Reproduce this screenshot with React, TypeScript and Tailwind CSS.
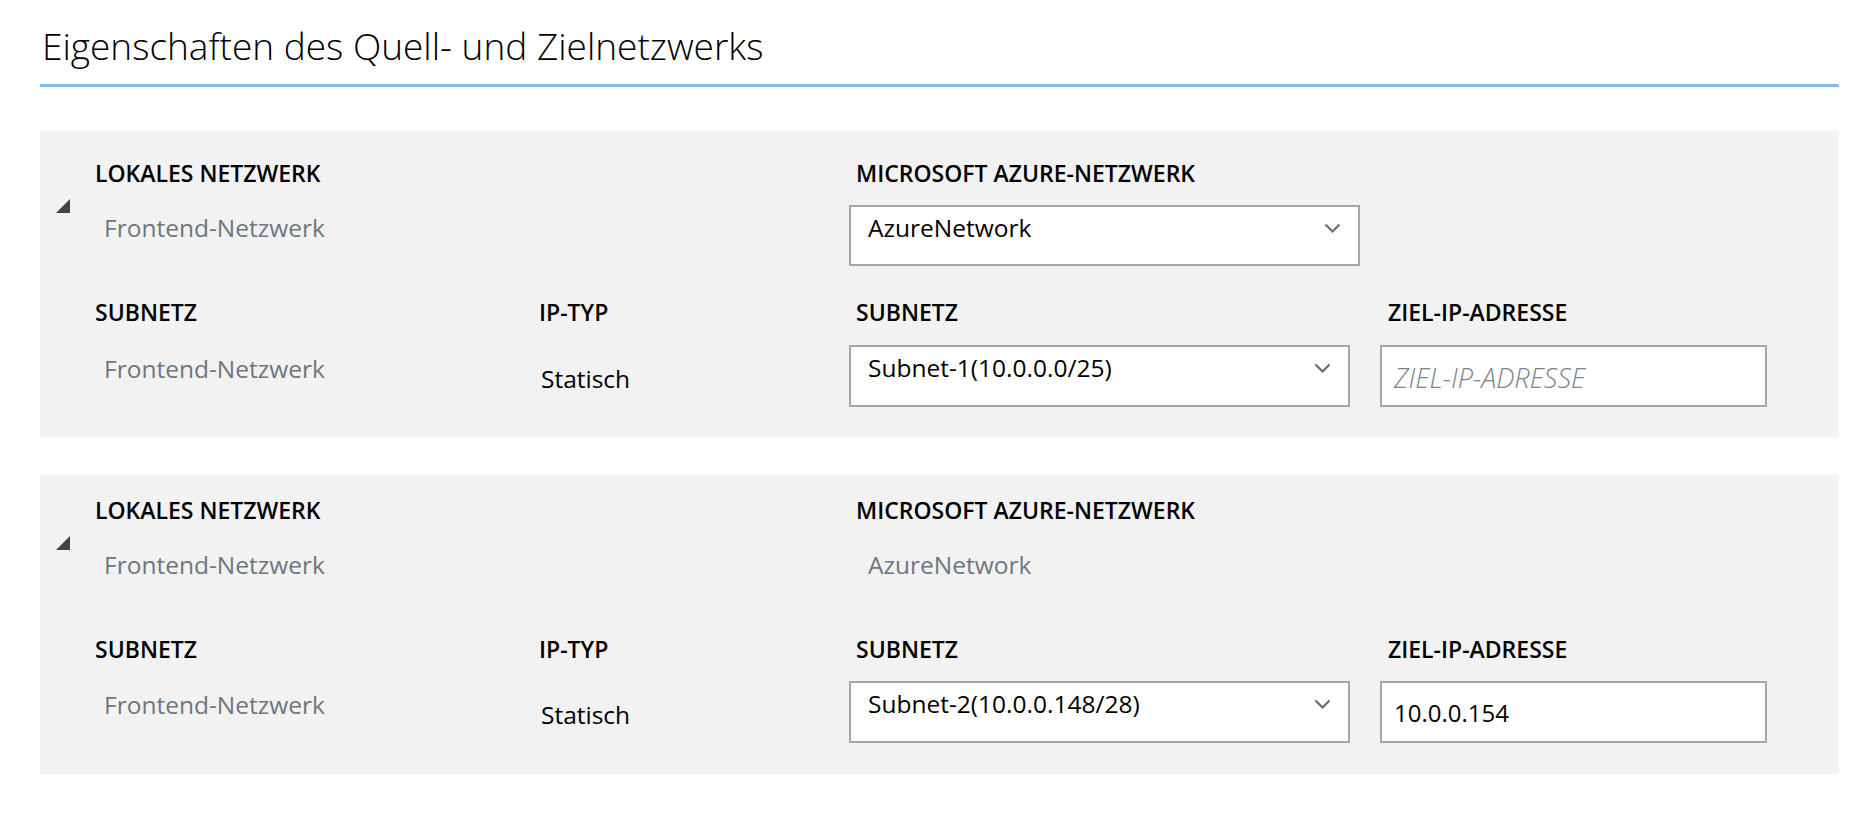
import clsx from "clsx";
import type { ReactNode } from "react";

interface MappingRow {
  source: string;
  sourceSubnet: string;
  ipType: string;
  targetNetwork: string;
  targetEditable: boolean;
  targetSubnet: string;
  targetIp: string;
}

const rows: MappingRow[] = [
  {
    source: "Frontend-Netzwerk",
    sourceSubnet: "Frontend-Netzwerk",
    ipType: "Statisch",
    targetNetwork: "AzureNetwork",
    targetEditable: true,
    targetSubnet: "Subnet-1(10.0.0.0/25)",
    targetIp: "",
  },
  {
    source: "Frontend-Netzwerk",
    sourceSubnet: "Frontend-Netzwerk",
    ipType: "Statisch",
    targetNetwork: "AzureNetwork",
    targetEditable: false,
    targetSubnet: "Subnet-2(10.0.0.148/28)",
    targetIp: "10.0.0.154",
  },
];

function Label({ children, className }: { children: ReactNode; className?: string }) {
  return (
    <div className={clsx("whitespace-nowrap text-[23px] leading-[30px] font-semibold text-black", className)}>
      {children}
    </div>
  );
}

function Chevron() {
  return (
    <svg width="17" height="10" viewBox="0 0 17 10" className="mt-[16px] shrink-0">
      <polyline points="1.5,1.5 8.5,8.5 15.5,1.5" fill="none" stroke="#6e6e6e" strokeWidth="2.2" />
    </svg>
  );
}

function Dropdown({ value, width }: { value: string; width: string }) {
  return (
    <div
      className={clsx(
        "flex h-full items-start justify-between border-2 border-[#a6a6a6] bg-white pl-[17px] pr-[17px]",
        width
      )}
    >
      <span className="pt-[1px] text-[24.5px] leading-[40px] text-black">{value}</span>
      <Chevron />
    </div>
  );
}

function Panel({ row, first }: { row: MappingRow; first: boolean }) {
  return (
    <section className={clsx("bg-[#f2f2f2]", first ? "pt-[27px] pb-[30px]" : "pt-[20px] pb-[31px]")}>
      <div className="flex h-[30px]">
        <div className="w-[55px]" />
        <Label className="w-[444px]">LOKALES NETZWERK</Label>
        <div className="w-[310px]" />
        <Label className="w-[531px] pl-[7px]">MICROSOFT AZURE-NETZWERK</Label>
      </div>

      <div className="mt-[17px] flex h-[61px]">
        <div className="w-[55px]">
          <svg width="14" height="14" viewBox="0 0 14 14" className="-mt-[6px] ml-[16px]">
            <polygon points="14,0 14,14 0,14" fill="#444444" />
          </svg>
        </div>
        <div className="w-[444px] pl-[9px] pt-[3px] text-[24.5px] leading-[40px] text-[#6e767e]">{row.source}</div>
        <div className="w-[310px]" />
        <div className="w-[531px]">
          {row.targetEditable ? (
            <Dropdown value={row.targetNetwork} width="w-[511px]" />
          ) : (
            <div className="pl-[19px] pt-[3px] text-[24.5px] leading-[40px] text-[#6e767e]">{row.targetNetwork}</div>
          )}
        </div>
      </div>

      <div className="mt-[31px] flex h-[30px]">
        <div className="w-[55px]" />
        <Label className="w-[444px]">SUBNETZ</Label>
        <Label className="w-[310px]">IP-TYP</Label>
        <Label className="w-[531px] pl-[7px]">SUBNETZ</Label>
        <Label className="pl-[8px]">ZIEL-IP-ADRESSE</Label>
      </div>

      <div className={clsx("flex h-[62px]", first ? "mt-[18px]" : "mt-[17px]")}>
        <div className="w-[55px]" />
        <div className="w-[444px] pl-[9px] pt-[4px] text-[24.5px] leading-[40px] text-[#6e767e]">{row.sourceSubnet}</div>
        <div className="flex w-[310px] items-center pl-[2px] pt-[5px] text-[24.5px] leading-[40px] text-black">{row.ipType}</div>
        <div className="w-[531px]">
          <Dropdown value={row.targetSubnet} width="w-[501px]" />
        </div>
        <div className="flex h-full w-[387px] items-center border-2 border-[#a6a6a6] bg-white pl-[12px] leading-[40px]">
          {row.targetIp ? (
            <span className="pt-[2px] text-[24px] text-black">{row.targetIp}</span>
          ) : (
            <span className="pt-[4px] text-[27px] font-light italic text-[#7c838b]">ZIEL-IP-ADRESSE</span>
          )}
        </div>
      </div>
    </section>
  );
}

export default function App() {
  return (
    <div className="min-h-screen bg-white pl-[40px] pr-[31px] pt-[22px] font-['Open_Sans',sans-serif]">
      <header className="border-b-[3px] border-[#8dbae2] pb-[14px]">
        <h1 className="pl-[2px] text-[37px] leading-[48px] font-light text-black">
          Eigenschaften des Quell- und Zielnetzwerks
        </h1>
      </header>

      <div className="mt-[44px] flex flex-col gap-[38px]">
        {rows.map((row, i) => (
          <Panel key={i} row={row} first={i === 0} />
        ))}
      </div>
    </div>
  );
}
